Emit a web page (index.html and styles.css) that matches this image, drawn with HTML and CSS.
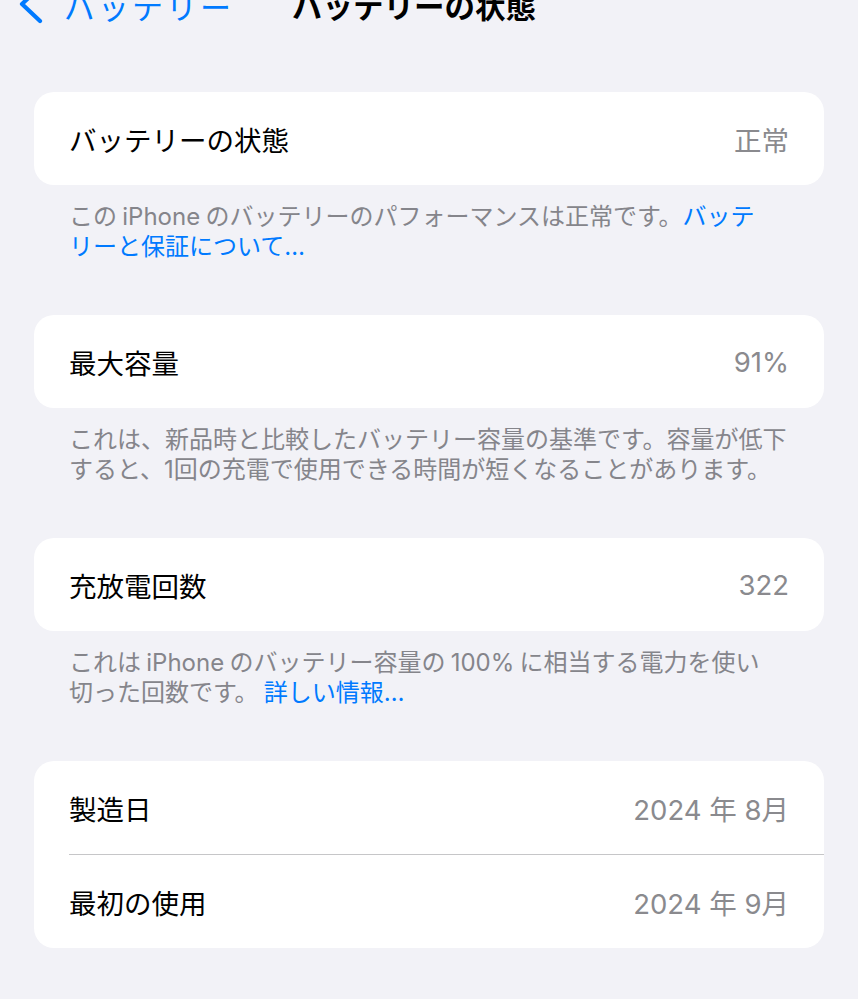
FILE: index.html
```html
<!DOCTYPE html>
<html lang="ja">
<head>
    <meta charset="utf-8">
    <title>バッテリーの状態</title>
    <link rel="stylesheet" href="styles.css">
</head>
<body>
    <div class="nav">
        <a class="back" href="#">
            <svg class="chevron" width="26" height="40" viewBox="0 0 26 40">
                <path d="M22 2 L4 19 L22 36" fill="none" stroke="#007aff" stroke-width="4.2" stroke-linecap="round" stroke-linejoin="round"/>
            </svg>
            <span>バッテリー</span>
        </a>
        <div class="nav-title">バッテリーの状態</div>
    </div>

    <div class="content">
        <div class="card">
            <div class="row">
                <span class="label">バッテリーの状態</span>
                <span class="value">正常</span>
            </div>
        </div>
        <div class="footer">この iPhone のバッテリーのパフォーマンスは正常です。<a href="#">バッテリーと保証について…</a></div>

        <div class="card">
            <div class="row">
                <span class="label">最大容量</span>
                <span class="value">91%</span>
            </div>
        </div>
        <div class="footer">これは、新品時と比較したバッテリー容量の基準です。容量が低下すると、1回の充電で使用できる時間が短くなることがあります。</div>

        <div class="card">
            <div class="row">
                <span class="label">充放電回数</span>
                <span class="value">322</span>
            </div>
        </div>
        <div class="footer">これは iPhone のバッテリー容量の 100% に相当する電力を使い切った回数です。 <a href="#">詳しい情報…</a></div>

        <div class="card">
            <div class="row">
                <span class="label">製造日</span>
                <span class="value">2024 年 8月</span>
            </div>
            <div class="row">
                <span class="label">最初の使用</span>
                <span class="value">2024 年 9月</span>
            </div>
        </div>
    </div>
</body>
</html>
```

FILE: styles.css
```css
body {
    margin: 0;
    background: #f2f2f7;
    font-family: Inter, "Noto Sans CJK JP", sans-serif;
    color: #000;
    overflow: hidden;
}

a {
    color: #007aff;
    text-decoration: none;
}

.nav {
    height: 50px;
    margin-top: -20px;
    display: flex;
    align-items: center;
    padding-left: 18px;
}

.back {
    display: flex;
    align-items: center;
    font-size: 31px;
    letter-spacing: 3px;
}

    .back .chevron {
        margin-right: 20px;
    }

.nav-title {
    margin-left: 58px;
    font-size: 30.5px;
    font-weight: 700;
}

.content {
    padding: 62px 34px 0 34px;
}

.card {
    background: #fff;
    border-radius: 20px;
    overflow: hidden;
}

.row {
    height: 93px;
    margin-left: 35px;
    padding-right: 35px;
    display: flex;
    align-items: center;
    justify-content: space-between;
    font-size: 27.5px;
}

    .row + .row {
        border-top: 1px solid #c6c6c8;
    }

.value {
    color: #8a8a8e;
}

.footer {
    padding: 17px 32px 0 35px;
    margin-bottom: 53px;
    font-size: 24px;
    line-height: 30px;
    color: #85858b;
    line-break: strict;
    word-spacing: -1.5px;
}
```
